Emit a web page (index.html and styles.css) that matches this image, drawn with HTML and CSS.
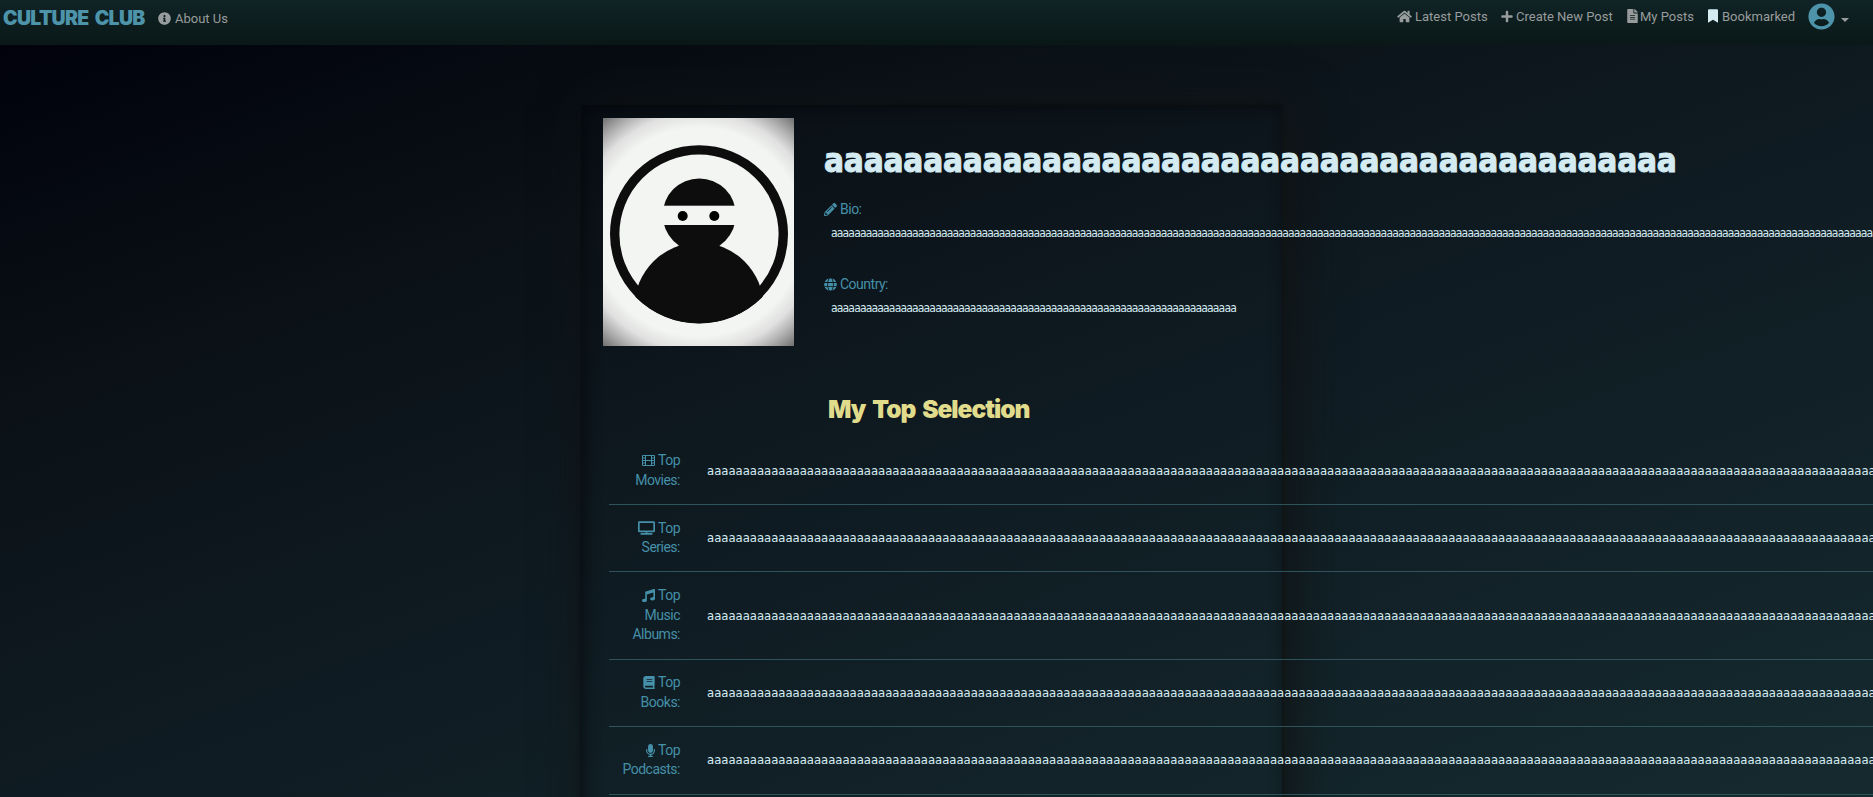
FILE: index.html
```html
<!DOCTYPE html>
<html lang="en">
<head>
<meta charset="utf-8">
<title>Culture Club</title>
<link rel="stylesheet" href="styles.css">
</head>
<body>
<nav class="navbar">
  <a class="brand">CULTURE CLUB</a>
  <a class="link about"><svg class="icon" width="13" height="13" viewBox="0 0 512 512"><path d="M256 8C119 8 8 119 8 256s111 248 248 248 248-111 248-248S393 8 256 8zm0 110c23.200 0 42 18.800 42 42s-18.800 42-42 42-42-18.800-42-42 18.800-42 42-42zm56 254c0 6.600-5.400 12-12 12h-88c-6.600 0-12-5.400-12-12v-24c0-6.600 5.400-12 12-12h12v-64h-12c-6.600 0-12-5.400-12-12v-24c0-6.600 5.400-12 12-12h64c6.600 0 12 5.400 12 12v100h12c6.600 0 12 5.400 12 12z"/></svg><span>About Us</span></a>
  <div class="menu">
    <a class="link home"><svg class="icon" width="15" height="13" viewBox="0 0 576 512"><path d="M280 148L96 300v164a16 16 0 0 0 16 16h112a16 16 0 0 0 16-16v-96a16 16 0 0 1 16-16h64a16 16 0 0 1 16 16v96a16 16 0 0 0 16 16h112a16 16 0 0 0 16-16V300L296 148a12 12 0 0 0-16 0zM572 251l-84-69V44a12 12 0 0 0-12-12h-56a12 12 0 0 0-12 12v72l-90-74a48 48 0 0 0-61 0L4 251a12 12 0 0 0-1 17l25 31a12 12 0 0 0 17 2L280 107a12 12 0 0 1 16 0l235 194a12 12 0 0 0 17-2l26-31a12 12 0 0 0-2-17z"/></svg><span>Latest Posts</span></a>
    <a class="link create"><svg class="icon" width="12" height="13" viewBox="0 0 448 512"><path d="M416 208H272V64a32 32 0 0 0-32-32h-32a32 32 0 0 0-32 32v144H32a32 32 0 0 0-32 32v32a32 32 0 0 0 32 32h144v144a32 32 0 0 0 32 32h32a32 32 0 0 0 32-32V304h144a32 32 0 0 0 32-32v-32a32 32 0 0 0-32-32z"/></svg><span>Create New Post</span></a>
    <a class="link mine"><svg class="icon" width="11" height="14" viewBox="0 0 384 512"><path d="M224 136V0H24C11 0 0 11 0 24v464c0 13 11 24 24 24h336c13 0 24-11 24-24V160H248c-13 0-24-11-24-24zm64 236c0 7-5 12-12 12H108c-7 0-12-5-12-12v-8c0-7 5-12 12-12h168c7 0 12 5 12 12zm0-64c0 7-5 12-12 12H108c-7 0-12-5-12-12v-8c0-7 5-12 12-12h168c7 0 12 5 12 12zm0-72v8c0 7-5 12-12 12H108c-7 0-12-5-12-12v-8c0-7 5-12 12-12h168c7 0 12 5 12 12zm96-114v6H256V0h6c6 0 12 3 17 7l98 98c4 5 7 11 7 17z"/></svg><span>My Posts</span></a>
    <a class="link saved"><svg class="icon" width="10" height="14" viewBox="0 0 384 512"><path d="M0 512V48C0 21 21 0 48 0h288c27 0 48 21 48 48v464L192 400 0 512z"/></svg><span>Bookmarked</span></a>
    <svg class="avatar" width="27" height="27" viewBox="0 0 496 512"><path d="M248 8C111 8 0 119 0 256s111 248 248 248 248-111 248-248S385 8 248 8zm0 80c50 0 88 39 88 88s-39 88-88 88-88-39-88-88 39-88 88-88zm0 352c-60 0-112-24-144-66 24-44 62-70 104-70 12 0 20 8 40 8s28-8 40-8c42 0 80 26 104 70-32 42-84 66-144 66z"/></svg>
    <span class="caret"></span>
  </div>
</nav>
<main class="card">
  <header class="profile">
    <svg class="photo" width="191" height="228" viewBox="0 0 191 228">
      <defs>
        <radialGradient id="vignette" gradientUnits="userSpaceOnUse" cx="95.500" cy="114" r="149"><stop offset="0.700" stop-color="#f3f5f2"/><stop offset="0.800" stop-color="#dfe0df"/><stop offset="0.900" stop-color="#a9aaa9"/><stop offset="1" stop-color="#6e6e6e"/></radialGradient>
        <clipPath id="disc"><circle cx="96" cy="116.500" r="89"/></clipPath>
      </defs>
      <rect width="191" height="228" fill="url(#vignette)"/>
      <circle cx="96" cy="116.200" r="84.300" fill="#f3f5f2" stroke="#0d0d0d" stroke-width="9.400"/>
      <g fill="#0d0d0d">
        <circle cx="96" cy="189" r="64.500" clip-path="url(#disc)"/>
        <circle cx="96.300" cy="97" r="36.600"/>
      </g>
      <rect x="56" y="87.700" width="80" height="19.300" fill="#f3f5f2"/>
      <circle cx="79.700" cy="98" r="5"/><circle cx="111.300" cy="98" r="5"/>
    </svg>
    <div class="details">
      <h1 class="name">aaaaaaaaaaaaaaaaaaaaaaaaaaaaaaaaaaaaaaaaaaa</h1>
      <div class="label"><svg class="icon" width="13" height="13" viewBox="0 0 512 512"><path d="M498 142l-46 46c-5 5-12 5-17 0L324 77c-5-5-5-12 0-17l46-46c19-19 49-19 68 0l60 60c19 19 19 49 0 68zM284 100L22 362 0 484c-3 16 12 31 28 28l122-21 262-262c5-5 5-12 0-17L301 100c-5-5-12-5-17 0zM124 340c-5-6-5-14 0-20l154-154c6-5 14-5 20 0s5 14 0 20L144 340c-6 5-14 5-20 0zM88 424h48v36l-64 12-32-32 12-64h36v48z"/></svg><span>Bio:</span></div>
      <p class="value bio">aaaaaaaaaaaaaaaaaaaaaaaaaaaaaaaaaaaaaaaaaaaaaaaaaaaaaaaaaaaaaaaaaaaaaaaaaaaaaaaaaaaaaaaaaaaaaaaaaaaaaaaaaaaaaaaaaaaaaaaaaaaaaaaaaaaaaaaaaaaaaaaaaaaaaaaaaaaaaaaaaaaaaaaaaaaaaaaaaaaaaaaaaaaaaaa</p>
      <div class="label"><svg class="icon" width="13" height="13" viewBox="0 0 496 512"><path d="M336 160C322 71 288 8 248 8s-74 63-88 152h176zM152 256c0 22 1 44 3 64h186c2-20 3-42 3-64s-1-44-3-64H155c-2 20-3 42-3 64zm325-96C448 92 390 39 318 18c25 34 42 86 51 142h108zM178 18C106 39 48 92 20 160h107c9-56 26-108 51-142zm309 174H373c2 21 3 43 3 64s-1 43-3 64h114c5-21 9-42 9-64s-4-43-9-64zM120 256c0-21 1-43 3-64H9c-5 21-9 42-9 64s4 43 9 64h114c-2-21-3-43-3-64zm40 96c14 89 48 152 88 152s74-63 88-152H160zm158 142c72-21 130-74 159-142H369c-9 56-26 108-51 142zM20 352c28 68 86 121 158 142-25-34-42-86-51-142H20z"/></svg><span>Country:</span></div>
      <p class="value">aaaaaaaaaaaaaaaaaaaaaaaaaaaaaaaaaaaaaaaaaaaaaaaaaaaaaaaaaaaaaaaaaaaaaa</p>
    </div>
  </header>
  <h2 class="heading">My Top Selection</h2>
  <section class="list">
    <div class="row"><div class="title"><svg class="icon film" width="13" height="11" viewBox="0 0 13 11"><path fill="none" stroke="currentColor" d="M.5.5h12v10H.5zM3.500.5v10M9.500.5v10M3.500 5.500h6M.5 3h3M.5 5.500h3M.5 8h3M9.500 3h3M9.500 5.500h3M9.500 8h3"/></svg> Top<br>Movies:</div><p class="items">aaaaaaaaaaaaaaaaaaaaaaaaaaaaaaaaaaaaaaaaaaaaaaaaaaaaaaaaaaaaaaaaaaaaaaaaaaaaaaaaaaaaaaaaaaaaaaaaaaaaaaaaaaaaaaaaaaaaaaaaaaaaaaaaaaaaaaaaaaaaaaaaaaaaaaaaaaaaaaaaaaaaaaaaaaaaaaaaaaaaa</p></div>
    <div class="row"><div class="title"><svg class="icon" width="17" height="14" viewBox="0 0 640 512"><path d="M592 0H48A48 48 0 0 0 0 48v320a48 48 0 0 0 48 48h240v32H112a16 16 0 0 0-16 16v32a16 16 0 0 0 16 16h416a16 16 0 0 0 16-16v-32a16 16 0 0 0-16-16H352v-32h240a48 48 0 0 0 48-48V48a48 48 0 0 0-48-48zm-16 352H64V64h512z"/></svg> Top<br>Series:</div><p class="items">aaaaaaaaaaaaaaaaaaaaaaaaaaaaaaaaaaaaaaaaaaaaaaaaaaaaaaaaaaaaaaaaaaaaaaaaaaaaaaaaaaaaaaaaaaaaaaaaaaaaaaaaaaaaaaaaaaaaaaaaaaaaaaaaaaaaaaaaaaaaaaaaaaaaaaaaaaaaaaaaaaaaaaaaaaaaaaaaaaaaa</p></div>
    <div class="row"><div class="title"><svg class="icon" width="13" height="13" viewBox="0 0 512 512"><path d="M470 2L150 96a32 32 0 0 0-22 30v261a139 139 0 0 0-32-3c-53 0-96 28-96 64s43 64 96 64 96-28 96-64V214l256-75v184a138 138 0 0 0-32-3c-53 0-96 28-96 64s43 64 96 64 96-29 96-64V32a32 32 0 0 0-42-30z"/></svg> Top<br>Music<br>Albums:</div><p class="items">aaaaaaaaaaaaaaaaaaaaaaaaaaaaaaaaaaaaaaaaaaaaaaaaaaaaaaaaaaaaaaaaaaaaaaaaaaaaaaaaaaaaaaaaaaaaaaaaaaaaaaaaaaaaaaaaaaaaaaaaaaaaaaaaaaaaaaaaaaaaaaaaaaaaaaaaaaaaaaaaaaaaaaaaaaaaaaaaaaaaa</p></div>
    <div class="row"><div class="title"><svg class="icon" width="12" height="13" viewBox="0 0 448 512"><path d="M448 360V24c0-13-11-24-24-24H96C43 0 0 43 0 96v320c0 53 43 96 96 96h328c13 0 24-11 24-24v-16c0-8-4-14-9-19-4-15-4-59 0-74 5-4 9-11 9-19zM128 134c0-3 3-6 6-6h212c3 0 6 3 6 6v20c0 3-3 6-6 6H134c-3 0-6-3-6-6zm0 64c0-3 3-6 6-6h212c3 0 6 3 6 6v20c0 3-3 6-6 6H134c-3 0-6-3-6-6zm253 250H96a32 32 0 0 1 0-64h285c-2 17-2 47 0 64z"/></svg> Top<br>Books:</div><p class="items">aaaaaaaaaaaaaaaaaaaaaaaaaaaaaaaaaaaaaaaaaaaaaaaaaaaaaaaaaaaaaaaaaaaaaaaaaaaaaaaaaaaaaaaaaaaaaaaaaaaaaaaaaaaaaaaaaaaaaaaaaaaaaaaaaaaaaaaaaaaaaaaaaaaaaaaaaaaaaaaaaaaaaaaaaaaaaaaaaaaaa</p></div>
    <div class="row"><div class="title"><svg class="icon" width="9" height="13" viewBox="0 0 352 512"><path d="M176 352a96 96 0 0 0 96-96V96a96 96 0 0 0-192 0v160a96 96 0 0 0 96 96zm160-160h-16a16 16 0 0 0-16 16v48a128 128 0 0 1-256 0v-48a16 16 0 0 0-16-16H16a16 16 0 0 0-16 16v42c0 90 64 170 152 182v32H96a16 16 0 0 0-16 16v16a16 16 0 0 0 16 16h160a16 16 0 0 0 16-16v-16a16 16 0 0 0-16-16h-56v-32c86-12 152-86 152-176v-48a16 16 0 0 0-16-16z"/></svg> Top<br>Podcasts:</div><p class="items">aaaaaaaaaaaaaaaaaaaaaaaaaaaaaaaaaaaaaaaaaaaaaaaaaaaaaaaaaaaaaaaaaaaaaaaaaaaaaaaaaaaaaaaaaaaaaaaaaaaaaaaaaaaaaaaaaaaaaaaaaaaaaaaaaaaaaaaaaaaaaaaaaaaaaaaaaaaaaaaaaaaaaaaaaaaaaaaaaaaaa</p></div>
  </section>
</main>
</body>
</html>
```
FILE: styles.css
```css
* { box-sizing: border-box; }
html { height: 100%; overflow: hidden; }
body {
  margin: 0;
  height: 100%;
  overflow: hidden;
  background: linear-gradient(160deg, #00000a 0%, #0b1218 30%, #0f1b22 55%, #152a2f 100%);
  font-family: Roboto, sans-serif;
  color: #d4ebf2;
}
h1, h2, p { margin: 0; }
.icon { display: inline-block; fill: currentColor; flex: none; }

.navbar {
  display: flex;
  align-items: flex-start;
  height: 45px;
  padding: 0 24px 0 3px;
  background: linear-gradient(#102326, #0a1817);
}
.brand {
  width: 142px;
  margin-top: 6px;
  font: 900 19.5px/24px Inter, sans-serif;
  letter-spacing: -0.7px;
  word-spacing: 3px;
  color: #4d94aa;
  white-space: nowrap;
}
.link {
  display: flex;
  align-items: center;
  gap: 3px;
  height: 20px;
  font-size: 13px;
  color: #989c9c;
  white-space: nowrap;
}
.about { margin: 8px 0 0 13px; gap: 4px; }
.menu { display: flex; margin: 6px 0 0 auto; }
.home { width: 104px; }
.create { width: 126px; gap: 3px; }
.mine { width: 81px; gap: 2px; }
.saved { width: 100px; gap: 4px; }
.saved .icon { color: #d4ebf2; }
.avatar { margin-top: -3px; fill: #4d94aa; }
.caret {
  margin: 12px 0 0 6px;
  width: 8px;
  height: 4px;
  border: 4px solid transparent;
  border-top-color: #989c9c;
  border-bottom: 0;
}

.card {
  width: 701px;
  height: 900px;
  margin: 60px 0 0 581px;
  padding: 13px 0 0 22px;
  box-shadow: 10px 0 45px #111414, 0 0 4px #0a0c0e, inset 3px 2px 15px rgba(0, 0, 0, 0.5);
}
.profile { display: flex; gap: 30px; height: 228px; }
.photo { flex: none; display: block; }
.details { padding-top: 18px; min-width: 0; }
.name {
  height: 50px;
  font: bold 33px/50px "DejaVu Sans Condensed", "DejaVu Sans", sans-serif;
  font-stretch: condensed;
  letter-spacing: -0.2px;
  -webkit-text-stroke: 0.9px #d4ebf2;
  white-space: nowrap;
}
.label {
  display: flex;
  align-items: center;
  gap: 3px;
  height: 20px;
  margin-top: 13px;
  font-size: 14px;
  letter-spacing: -0.5px;
  color: #4590a8;
}
.value {
  height: 20px;
  margin: 4px 0 31px 7px;
  font: 12px/20px "DejaVu Sans Condensed", "DejaVu Sans", sans-serif;
  font-stretch: condensed;
  letter-spacing: -0.83px;
  white-space: nowrap;
}
.value + .label { margin-top: 0; }
.heading {
  margin: 48px 0 0 225px;
  font: 900 24.5px/30px Inter, sans-serif;
  letter-spacing: -1px;
  word-spacing: 3px;
  color: #e0dc8c;
  white-space: nowrap;
}
.list { margin: 13.3px 0 0 6px; width: 1264px; }
.row {
  display: grid;
  grid-template-columns: 71px 1fr;
  gap: 27px;
  align-items: center;
  padding: 13.7px 0;
  border-bottom: 1px solid #2f535a;
}
.title {
  font-size: 14px;
  line-height: 19.6px;
  letter-spacing: -0.5px;
  text-align: right;
  color: #4590a8;
}
.title .icon { vertical-align: -2px; }
.title .film { vertical-align: -1px; }
.items {
  font: 13px/20px "DejaVu Sans Condensed", "DejaVu Sans", sans-serif;
  font-stretch: condensed;
  letter-spacing: -0.04px;
  white-space: nowrap;
}
```
